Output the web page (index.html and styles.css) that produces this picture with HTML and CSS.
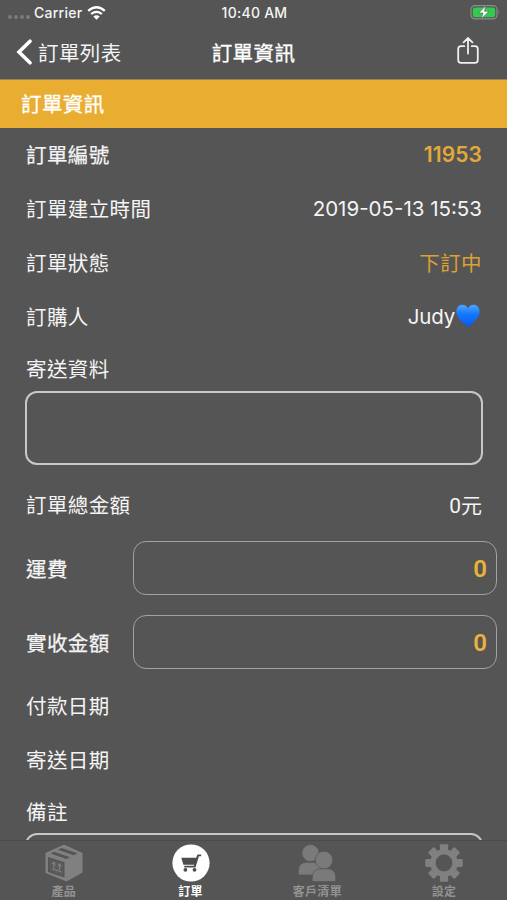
FILE: index.html
```html
<!DOCTYPE html>
<html lang="zh-Hant">
<head>
    <meta charset="UTF-8">
    <meta name="viewport" content="width=device-width, initial-scale=1.0">
    <title>訂單資訊</title>
    <link rel="stylesheet" href="styles.css">
</head>
<body>
    <div class="screen">
        <div class="status-bar">
            <div class="carrier">
                <span class="signal"><i></i><i></i><i></i><i></i></span>
                <span>Carrier</span>
                <svg class="wifi" viewBox="0 0 19 14" width="19" height="14">
                    <path d="M1.2 4.9 Q9.5 -2.3 17.8 4.9" fill="none" stroke="#fff" stroke-width="2.3"/>
                    <path d="M4.1 8 Q9.5 3.6 14.9 8" fill="none" stroke="#fff" stroke-width="2.2"/>
                    <path d="M6.3 10.4 Q9.5 7.9 12.7 10.4 L9.5 13.8 Z" fill="#fff"/>
                </svg>
            </div>
            <div class="time">10:40 AM</div>
            <svg class="battery" viewBox="0 0 31 15" width="31" height="15">
                <rect x="1" y=".7" width="26" height="13.2" rx="4" fill="none" stroke="#8d8d8d" stroke-width="1.2"/>
                <rect x="2.8" y="2.4" width="22.4" height="9.8" rx="2.3" fill="#34c94f"/>
                <path d="M28.6 5 q1.8 2.3 0 4.6 z" fill="#8d8d8d"/>
                <path d="M15.6 .8 L8.8 8 H13 L11.4 13.8 L19 6.3 H14.5 Z" fill="#fff" stroke="#4b6b50" stroke-width=".6"/>
            </svg>
        </div>

        <div class="nav-bar">
            <div class="back">
                <svg viewBox="0 0 17 26" width="17" height="26">
                    <path d="M14 2.2 L3 13 L14 23.8" fill="none" stroke="#fff" stroke-width="3.6" stroke-linecap="round"/>
                </svg>
                <span>訂單列表</span>
            </div>
            <div class="nav-title">訂單資訊</div>
            <svg class="share" viewBox="0 0 22 27" width="22" height="27">
                <path d="M7.3 9.2 H4 Q1.2 9.2 1.2 12 V23 Q1.2 25.8 4 25.8 H18 Q20.8 25.8 20.8 23 V12 Q20.8 9.2 18 9.2 H14.7 M11 16.5 V1.2 M6.6 5.3 L11 1 L15.4 5.3"/>
            </svg>
        </div>

        <div class="section-header">訂單資訊</div>

        <div class="content">
            <div class="row">
                <span class="medium">訂單編號</span>
                <span class="order-no">11953</span>
            </div>
            <div class="row">
                <span>訂單建立時間</span>
                <span class="latin">2019-05-13 15:53</span>
            </div>
            <div class="row">
                <span>訂單狀態</span>
                <span class="state">下訂中</span>
            </div>
            <div class="row">
                <span>訂購人</span>
                <span class="latin buyer">Judy<svg viewBox="0 0 24 24" width="24" height="24">
                    <defs>
                        <linearGradient id="heart" x1="0" y1="0" x2="0" y2="1">
                            <stop offset="0" stop-color="#4fa6ff"/>
                            <stop offset=".4" stop-color="#1479fb"/>
                            <stop offset="1" stop-color="#0757f0"/>
                        </linearGradient>
                    </defs>
                    <path d="M12 23.6 C8.6 19.4 .4 15 .4 7.4 C.4 3.4 3 .8 6.4 .8 C9 .8 11.1 2.2 12 4.6 C12.9 2.2 15 .8 17.6 .8 C21 .8 23.6 3.4 23.6 7.4 C23.6 15 15.4 19.4 12 23.6 Z" fill="url(#heart)"/>
                </svg></span>
            </div>

            <div class="label">寄送資料</div>
            <div class="text-box"></div>

            <div class="row total">
                <span>訂單總金額</span>
                <span class="amount">0元</span>
            </div>

            <div class="field">
                <span class="medium">運費</span>
                <div class="input">0</div>
            </div>
            <div class="field">
                <span class="medium">實收金額</span>
                <div class="input">0</div>
            </div>

            <div class="row"><span>付款日期</span></div>
            <div class="row"><span>寄送日期</span></div>
            <div class="label note">備註</div>
            <div class="text-box"></div>
        </div>

        <div class="tab-bar">
            <div class="tab">
                <svg viewBox="0 0 38 38" width="38" height="38">
                    <path d="M.5 9 L19 .5 L37.5 9 V28.5 L21.5 37.5 L.5 29 Z" fill="#808080"/>
                    <path d="M5.5 9.5 L9 7.8 L25 13.2 L21.3 15 Z M13 5.8 L16.6 4.1 L32.4 9.3 L28.7 11.2 Z" fill="#555"/>
                    <path d="M3 13 L19.5 18.2 V33.6 L3 28 Z" fill="#555"/>
                    <path d="M4.6 15 L18 19.4 V31.6 L4.6 27 Z" fill="#5c5c5c"/>
                    <path d="M8.8 24.2 V18.3 M7.2 19.9 L8.8 17.9 L10.4 20.9 M14.4 26 V20.1 M12.8 21.7 L14.4 19.7 L16 22.7 M7.4 25 L16.2 27.8" fill="none" stroke="#858585" stroke-width="1"/>
                </svg>
                <span>產品</span>
            </div>
            <div class="tab active">
                <svg viewBox="0 0 38 38" width="38" height="38">
                    <circle cx="19" cy="19" r="18.6" fill="#fff"/>
                    <path d="M9.3 13.8 H24.2 L25.5 10.4 H29.2 V12.2 H26.9 L23.5 23.4 H12.3 V21.8 H21.8 L22.2 20.7 L11.4 20.7 Z" fill="#4c4c4c"/>
                    <circle cx="13.4" cy="25.8" r="1.9" fill="#4c4c4c"/>
                    <circle cx="22.5" cy="25.8" r="1.9" fill="#4c4c4c"/>
                </svg>
                <span>訂單</span>
            </div>
            <div class="tab">
                <svg viewBox="0 0 38 38" width="38" height="38">
                    <g fill="#7a7a7a" stroke="#555" stroke-width=".7">
                        <path d="M.4 31 V26.5 Q.4 18.3 9 18.3 H16 Q24 18.3 24 26 V31 Z"/>
                        <circle cx="12.5" cy="9" r="8.6"/>
                        <path d="M14.2 37.6 V34 Q14.2 24.8 23 24.8 H29.5 Q37.8 24.8 37.8 34 V37.6 Z"/>
                        <circle cx="26" cy="16" r="8.8"/>
                    </g>
                </svg>
                <span>客戶清單</span>
            </div>
            <div class="tab">
                <svg viewBox="-19 -19 38 38" width="38" height="38">
                    <g fill="#808080">
                        <rect x="-4.1" y="-18.7" width="8.2" height="37.4" rx="1"/>
                        <rect x="-4.1" y="-18.7" width="8.2" height="37.4" rx="1" transform="rotate(45)"/>
                        <rect x="-4.1" y="-18.7" width="8.2" height="37.4" rx="1" transform="rotate(90)"/>
                        <rect x="-4.1" y="-18.7" width="8.2" height="37.4" rx="1" transform="rotate(135)"/>
                        <circle r="13.8"/>
                    </g>
                    <circle r="8.4" fill="#555"/>
                </svg>
                <span>設定</span>
            </div>
        </div>
    </div>
</body>
</html>
```

FILE: styles.css
```css
* {
    box-sizing: border-box;
}
body {
    margin: 0;
    background: #555;
    color: #f4f4f4;
    font-family: Inter, "Noto Sans CJK TC", sans-serif;
    font-size: 20.5px;
}
svg {
    display: block;
    flex-shrink: 0;
}
.screen {
    height: 900px;
    display: flex;
    flex-direction: column;
    overflow: hidden;
}

/* status bar */
.status-bar {
    height: 26px;
    flex-shrink: 0;
    display: grid;
    grid-template-columns: 1fr auto 1fr;
    align-items: center;
    padding: 0 6px 1px 8px;
    font-size: 14px;
    font-weight: 500;
    letter-spacing: 0.25px;
}
.carrier {
    display: flex;
    align-items: center;
    gap: 4px;
}
.signal {
    display: flex;
    gap: 2px;
    padding-top: 8px;
}
.signal i {
    width: 4px;
    height: 4px;
    border-radius: 50%;
    background: #7b7b7b;
}
.wifi {
    margin-left: 1px;
}
.battery {
    justify-self: end;
}

/* navigation */
.nav-bar {
    height: 53px;
    flex-shrink: 0;
    display: grid;
    grid-template-columns: 1fr auto 1fr;
    align-items: center;
    padding: 0 28px 1px 16px;
    letter-spacing: 0.4px;
}
.back {
    display: flex;
    align-items: center;
    gap: 5px;
}
.back span,
.nav-title {
    padding-bottom: 1px;
}
.nav-title {
    -webkit-text-stroke: 0.3px #fff;
    color: #fff;
    padding-left: 12px;
}
.share {
    justify-self: end;
    fill: none;
    stroke: #f0f0f0;
    stroke-width: 1.8;
    stroke-linecap: round;
    margin-bottom: 4px;
}

.section-header {
    height: 49px;
    flex-shrink: 0;
    line-height: 49px;
    padding-left: 21px;
    background: #e9ad31;
    border-top: 1px solid #9b8350;
    color: #fff;
    letter-spacing: 0.4px;
    -webkit-text-stroke: 0.3px #fff;
}

/* order details */
.content {
    flex: 1;
    min-height: 0;
    overflow: hidden;
    letter-spacing: 0.4px;
}
.row {
    height: 54px;
    display: flex;
    align-items: center;
    justify-content: space-between;
    padding: 0 25px 2px 26px;
}
.medium {
    -webkit-text-stroke: 0.25px #f4f4f4;
}
.order-no {
    color: #e2a93a;
    font-size: 21px;
    font-weight: 600;
    letter-spacing: 0.1px;
}
.latin {
    letter-spacing: 0;
}
.state {
    color: #dda032;
}
.buyer {
    display: flex;
    align-items: center;
    padding-right: 2px;
    gap: 1px;
    letter-spacing: -0.2px;
}
.label {
    height: 47px;
    line-height: 52px;
    padding-left: 26px;
}
.text-box {
    height: 74px;
    margin: 0 24px 0 25px;
    border: 2px solid #c8c8c8;
    border-radius: 12px;
}
.total {
    margin-top: 13px;
}
.amount {
    font-family: Roboto, "Noto Sans CJK TC", sans-serif;
    font-size: 21px;
    letter-spacing: 0;
}
.field {
    display: grid;
    grid-template-columns: 107px 1fr;
    align-items: center;
    padding: 0 10px 0 26px;
    margin: 9px 0 20px;
}
.field .medium {
    padding-bottom: 1px;
}
.field + .field {
    margin-top: 0;
    margin-bottom: 10px;
}
.input {
    height: 54px;
    line-height: 54px;
    padding-right: 9px;
    border: 1px solid #a2a2a2;
    border-radius: 13px;
    color: #eab13c;
    font-family: Roboto, sans-serif;
    font-size: 24px;
    font-weight: 600;
    letter-spacing: 0;
    text-align: right;
}
.label.note {
    height: 46px;
}

/* bottom tabs */
.tab-bar {
    height: 60px;
    flex-shrink: 0;
    display: grid;
    grid-template-columns: repeat(4, 1fr);
    border-top: 1px solid #4b4b4b;
    color: #929292;
    font-size: 12px;
    letter-spacing: 0.3px;
}
.tab {
    display: flex;
    flex-direction: column;
    align-items: center;
    padding: 3px 0 0 1px;
}
.tab span {
    padding-top: 1px;
    line-height: 18px;
    font-weight: 700;
}
.tab.active {
    color: #fff;
}
```
